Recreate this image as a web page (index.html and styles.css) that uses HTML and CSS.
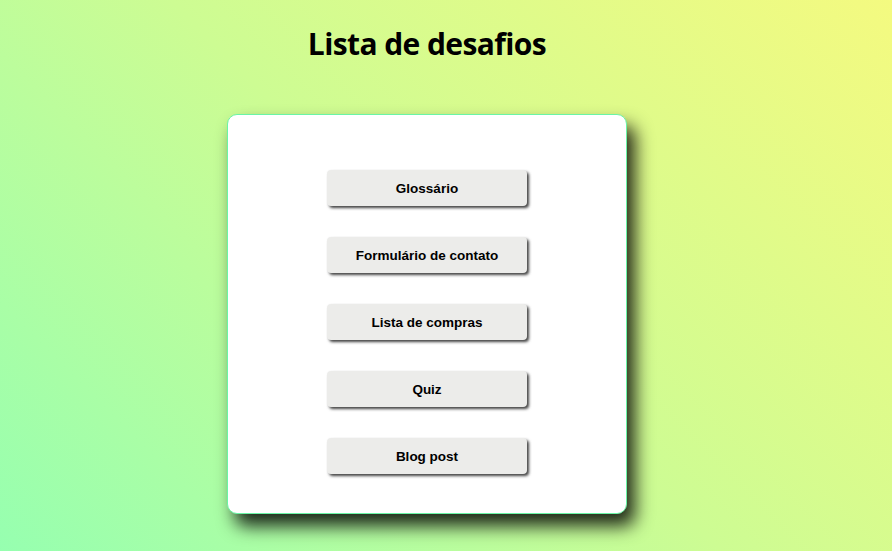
FILE: index.html
```html
<!DOCTYPE html>
<html lang="pt-BR">
<head>
<meta charset="utf-8">
<title>Lista de desafios</title>
<link rel="stylesheet" href="styles.css">
</head>
<body>
<main class="page">
  <h1 class="title">Lista de desafios</h1>
  <section class="card">
    <a class="btn" href="#">Glossário</a>
    <a class="btn" href="#">Formulário de contato</a>
    <a class="btn" href="#">Lista de compras</a>
    <a class="btn" href="#">Quiz</a>
    <a class="btn" href="#">Blog post</a>
  </section>
</main>
</body>
</html>
```

FILE: styles.css
```css
html, body {
  margin: 0;
  height: 100%;
}
body {
  background: linear-gradient(45deg, #96ffb0 0%, #cdfc93 50%, #f4fa80 100%);
  overflow: hidden;
}
.page {
  width: 854px;
  display: flex;
  flex-direction: column;
  align-items: center;
}
.title {
  margin: 24px 0 0;
  font-family: "Open Sans", sans-serif;
  font-weight: 700;
  font-size: 30px;
  line-height: 40px;
  letter-spacing: -0.6px;
  color: #000;
}
.card {
  margin-top: 50px;
  box-sizing: border-box;
  width: 400px;
  height: 400px;
  background: #fff;
  border: 1px solid #6af5a6;
  border-radius: 10px;
  box-shadow: 8px 12px 18px rgba(0, 0, 0, 0.85);
  display: flex;
  flex-direction: column;
  align-items: center;
  padding-top: 55px;
  gap: 31px;
}
.btn {
  box-sizing: border-box;
  width: 200px;
  height: 36px;
  display: flex;
  align-items: center;
  justify-content: center;
  background: #ececea;
  border-radius: 4px;
  box-shadow: 2px 2px 3px rgba(0, 0, 0, 0.75);
  font-family: "Liberation Sans", Arial, sans-serif;
  font-weight: 700;
  font-size: 13.5px;
  color: #000;
  text-decoration: none;
}
```
